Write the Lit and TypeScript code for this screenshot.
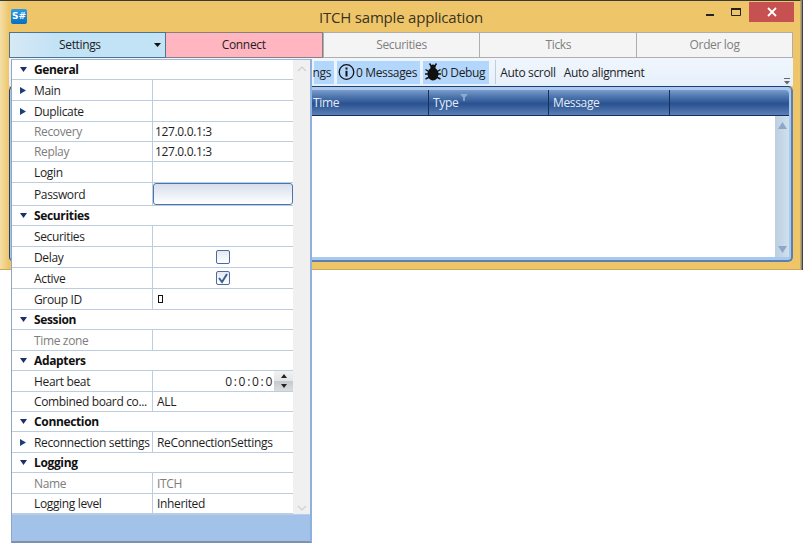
import { LitElement, html, css, svg } from 'lit'
import { customElement } from 'lit/decorators.js'

type Row = {
  label?: string
  value?: string
  h: number
  kind?: 'section' | 'password' | 'check' | 'checked' | 'spin' | 'box'
  expand?: boolean
  dim?: boolean
  dimValue?: boolean
}

const rows: Row[] = [
  { label: 'General', kind: 'section', h: 20 },
  { label: 'Main', expand: true, h: 21 },
  { label: 'Duplicate', expand: true, h: 21 },
  { label: 'Recovery', value: '127.0.0.1:3', dim: true, h: 20 },
  { label: 'Replay', value: '127.0.0.1:3', dim: true, h: 20 },
  { label: 'Login', h: 21 },
  { label: 'Password', kind: 'password', h: 23 },
  { label: 'Securities', kind: 'section', h: 20 },
  { label: 'Securities', h: 21 },
  { label: 'Delay', kind: 'check', h: 21 },
  { label: 'Active', kind: 'checked', h: 21 },
  { label: 'Group ID', kind: 'box', h: 21 },
  { label: 'Session', kind: 'section', h: 20 },
  { label: 'Time zone', dim: true, h: 21 },
  { label: 'Adapters', kind: 'section', h: 20 },
  { label: 'Heart beat', kind: 'spin', h: 21 },
  { label: 'Combined board co...', value: 'ALL', h: 20 },
  { label: 'Connection', kind: 'section', h: 20 },
  { label: 'Reconnection settings', value: 'ReConnectionSettings', expand: true, h: 21 },
  { label: 'Logging', kind: 'section', h: 20 },
  { label: 'Name', value: 'ITCH', dim: true, dimValue: true, h: 21 },
  { label: 'Logging level', value: 'Inherited', h: 20 },
]

const tri = (open: boolean) => html`<svg class="tri" width="8" height="8" viewBox="0 0 8 8">
  ${open ? svg`<path d="M0 1h7L3.5 6z" fill="#1b2f6b"/>` : svg`<path d="M0 1l6 3.5L0 8z" fill="#1b3f78"/>`}
</svg>`

@customElement('app-root')
export class AppRoot extends LitElement {
  static styles = css`
    :host {
      display: block;
      position: relative;
      width: 803px;
      height: 544px;
      overflow: hidden;
      background: #fff;
      font-family: "Open Sans", "Noto Sans", sans-serif;
      font-size: 12px;
      letter-spacing: -0.35px;
      color: #1e1e1e;
    }
    .window {
      width: 801px;
      height: 270px;
      box-sizing: border-box;
      background: linear-gradient(90deg, #f3dfa8, #eec669 9px);
      border: 1px solid #c9a85a;
      border-top-color: #3a3a3a;
      border-left-width: 0;
      padding: 0 7px 0 9px;
      box-shadow: 1px 0 0 #8a8a8a, 2px 0 0 #444;
    }
    .titlebar {
      height: 31px;
      display: flex;
      align-items: flex-start;
      position: relative;
    }
    .logo {
      width: 16px;
      height: 15px;
      margin: 8px 0 0 2px;
      border-radius: 2px;
      background: linear-gradient(#2f9be6, #0a6fbe);
      color: #fff;
      font: bold 9px/15px "DejaVu Sans", sans-serif;
      letter-spacing: 0;
      text-align: center;
    }
    .title {
      position: absolute;
      left: 0;
      right: 0;
      top: 6px;
      text-align: center;
      font-size: 15px;
      line-height: 20px;
      letter-spacing: -0.2px;
      color: #3a3320;
    }
    .controls {
      position: absolute;
      right: -1px;
      top: 1px;
      display: flex;
      align-items: flex-start;
    }
    .ctl {
      width: 26px;
      height: 20px;
      display: flex;
      align-items: center;
      justify-content: center;
    }
    .close {
      width: 45px;
      background: #c75050;
    }
    .tabs {
      display: flex;
      height: 26px;
    }
    .tab {
      flex: 0 0 20%;
      box-sizing: border-box;
      border: 1px solid #aeaeae;
      border-right-width: 0;
      padding-bottom: 2px;
      background: #f4f4f4;
      color: #7f7f7f;
      display: flex;
      align-items: center;
      justify-content: center;
      position: relative;
    }
    .tab:last-child {
      border-right-width: 1px;
    }
    .tab.settings {
      background: linear-gradient(90deg, #d7e9f5, #c2e2f6 30%);
      color: #1e1e1e;
      border: 1px solid #4d7590;
      padding-right: 15px;
    }
    .tab.connect {
      background: #ffb6c1;
      color: #1e1e1e;
      border: 1px solid #8a7f80;
      border-left-width: 0;
    }
    .caret {
      position: absolute;
      right: 4px;
      top: 10px;
    }
    .toolbar {
      height: 28px;
      background: linear-gradient(#f0f6fd, #e6f0fb);
      display: flex;
      align-items: center;
      padding-left: 305px;
      gap: 3px;
      position: relative;
    }
    .tbtn {
      height: 23px;
      background: #b3d7fc;
      display: flex;
      align-items: center;
      padding: 0 3px 0 1px;
    }
    .tbtn.first {
      padding: 0 3px 0 0;
      width: 17px;
      justify-content: flex-end;
    }
    .tbtn.debug {
      padding: 0 4px 0 2px;
    }
    .sep {
      width: 1px;
      height: 24px;
      background: #c3cdd8;
      margin: 0 1px 0 3px;
    }
    .plain {
      margin-right: 5px;
    }
    .overflow {
      position: absolute;
      right: 2px;
      bottom: 1px;
    }
    .panel {
      height: 176px;
      box-sizing: border-box;
      background: #a9c8ee;
      border: 1px solid #1f3f70;
      border-right: 2px solid #5d7fae;
      border-bottom: 2px solid #5d7fae;
      border-radius: 5px;
      padding: 3px 2px 3px 1px;
      display: flex;
      flex-direction: column;
    }
    .head {
      height: 26px;
      flex: none;
      box-sizing: border-box;
      display: grid;
      grid-template-columns: 418px 120px 121px 1fr;
      background: linear-gradient(#7c9ccb, #4f78b0 25%, #2b5290 55%, #5a80b6);
      border-bottom: 1px solid #16305e;
      border-radius: 4px 4px 0 0;
      color: #e3ecf8;
    }
    .hcell {
      display: flex;
      align-items: center;
      padding-left: 4px;
      border-right: 1px solid #16305e;
      position: relative;
    }
    .hcell:first-child {
      padding-left: 302px;
    }
    .hcell:last-child {
      border-right: 0;
    }
    .funnel {
      margin: -10px 0 0 2px;
    }
    .body {
      flex: 1;
      display: flex;
      background: #fff;
    }
    .grow {
      flex: 1;
    }
    .gridscroll {
      width: 14px;
      background: linear-gradient(90deg, #bccfe0, #cfe0ee);
      display: flex;
      flex-direction: column;
      justify-content: space-between;
      align-items: center;
      padding: 6px 0 4px;
    }
    .popup {
      position: absolute;
      left: 11px;
      top: 59px;
      width: 301px;
      height: 484px;
      box-sizing: border-box;
      border: 1px solid #9fb6d4;
      border-left-color: #8fa6c6;
      border-right: 2px solid #8fb0dc;
      border-bottom: 2px solid #7f92ac;
      background: #fff;
      display: flex;
      flex-direction: column;
    }
    .content {
      height: 454px;
      display: flex;
      flex: none;
    }
    .grid {
      width: 281px;
      flex: none;
    }
    .row {
      display: grid;
      grid-template-columns: 141px 1fr;
      box-sizing: border-box;
      border-bottom: 1px solid #bccddf;
    }
    .row.section {
      grid-template-columns: 1fr;
      font-weight: 700;
      color: #101010;
    }
    .h20 { height: 20px; }
    .h21 { height: 21px; }
    .h23 { height: 23px; }
    .name {
      display: flex;
      align-items: center;
      padding-left: 22px;
      position: relative;
      border-right: 1px solid #bccddf;
      white-space: nowrap;
    }
    .section .name {
      border-right: 0;
    }
    .tri {
      position: absolute;
      left: 8px;
      top: 6px;
    }
    .dim {
      color: #7d7d7d;
    }
    .val {
      display: flex;
      align-items: center;
      padding-left: 2px;
      white-space: nowrap;
      min-width: 0;
    }
    .val.pad {
      padding-left: 4px;
    }
    .val.center {
      justify-content: center;
      padding-left: 0;
    }
    .val.end {
      justify-content: flex-end;
      padding-left: 0;
      letter-spacing: 1.7px;
    }
    .pw {
      flex: 1;
      height: 22px;
      box-sizing: border-box;
      margin-left: -2px;
      border: 1px solid #4b74b2;
      border-radius: 3px;
      background: linear-gradient(#d7deec, #fff);
    }
    .check {
      width: 14px;
      height: 14px;
      box-sizing: border-box;
      border: 1px solid #4d6b9a;
      border-radius: 2px;
      background: linear-gradient(#e4e8f2, #fff);
      display: flex;
    }
    .glyphbox {
      width: 5px;
      height: 8px;
      box-sizing: border-box;
      margin-left: 3px;
      border: 1px solid #111;
    }
    .spin {
      width: 19px;
      height: 20px;
      box-sizing: border-box;
      background: linear-gradient(#f2f2f2, #e4e4e4 50%, #c4c9ce 50%, #dcdcdc);
      display: flex;
      flex-direction: column;
      align-items: center;
      justify-content: space-around;
      flex: none;
    }
    .vscroll {
      flex: 1;
      background: #f0f0f0;
      display: flex;
      flex-direction: column;
      justify-content: space-between;
      align-items: center;
      padding: 6px 0 3px;
    }
    .footer {
      flex: 1;
      background: #a3c2ea;
      border-top: 1px solid #b7cde8;
    }
  `

  renderValue(r: Row) {
    if (r.kind === 'password') return html`<div class="val"><div class="pw"></div></div>`
    if (r.kind === 'check') return html`<div class="val center"><div class="check"></div></div>`
    if (r.kind === 'checked') {
      return html`<div class="val center"><div class="check">
        <svg width="12" height="12" viewBox="0 0 12 12"><path d="M2 6l3 4 5-8" fill="none" stroke="#3d5f96" stroke-width="2"/></svg>
      </div></div>`
    }
    if (r.kind === 'box') return html`<div class="val"><div class="glyphbox"></div></div>`
    if (r.kind === 'spin') {
      return html`<div class="val end">0:0:0:0<div class="spin">
        <svg width="6" height="4" viewBox="0 0 6 4"><path d="M3 0l3 4H0z" fill="#222"/></svg>
        <svg width="6" height="4" viewBox="0 0 6 4"><path d="M0 0h6L3 4z" fill="#222"/></svg>
      </div></div>`
    }
    const cls = 'val' + (r.value && r.value !== '127.0.0.1:3' ? ' pad' : '') + (r.dimValue ? ' dim' : '')
    return html`<div class=${cls}>${r.value ?? ''}</div>`
  }

  renderRow(r: Row) {
    if (r.kind === 'section') {
      return html`<div class="row section h${r.h}"><div class="name">${tri(true)}${r.label}</div></div>`
    }
    return html`<div class="row h${r.h}">
      <div class="name ${r.dim ? 'dim' : ''}">${r.expand ? tri(false) : ''}${r.label}</div>
      ${this.renderValue(r)}
    </div>`
  }

  render() {
    return html`
      <div class="window">
        <div class="titlebar">
          <div class="logo">S#</div>
          <div class="title">ITCH sample application</div>
          <div class="controls">
            <div class="ctl"><svg width="10" height="10" viewBox="0 0 10 10"><path d="M1 7h8v2H1z" fill="#222"/></svg></div>
            <div class="ctl"><svg width="10" height="10" viewBox="0 0 10 10"><path d="M.5 1.5h9v7h-9z" fill="none" stroke="#222"/><path d="M0 1h10v2H0z" fill="#222"/></svg></div>
            <div class="ctl close"><svg width="10" height="10" viewBox="0 0 10 10"><path d="M1 1l8 8M9 1L1 9" stroke="#fff" stroke-width="1.8"/></svg></div>
          </div>
        </div>
        <div class="tabs">
          <div class="tab settings">Settings<svg class="caret" width="7" height="4" viewBox="0 0 7 4"><path d="M0 0h7L3.5 4z" fill="#111"/></svg></div>
          <div class="tab connect">Connect</div>
          <div class="tab">Securities</div>
          <div class="tab">Ticks</div>
          <div class="tab">Order log</div>
        </div>
        <div class="toolbar">
          <div class="tbtn first">ngs</div>
          <div class="tbtn">
            <svg width="18" height="18" viewBox="0 0 18 18"><circle cx="8.5" cy="9" r="7.3" fill="none" stroke="#111" stroke-width="1.3"/><path d="M7.5 4.5h2v2h-2zM7.5 7.8h2v5.7h-2z" fill="#111"/></svg>0 Messages
          </div>
          <div class="tbtn debug">
            <svg width="16" height="18" viewBox="0 0 16 18"><ellipse cx="8" cy="11" rx="5.5" ry="6.5" fill="#111"/><circle cx="8" cy="4" r="2.6" fill="#111"/><path d="M4.5 .5l2 3M11.5 .5l-2 3M.5 6.5l4 2.5M15.5 6.5l-4 2.5M0 11h4M16 11h-4M.5 16l4-2M15.5 16l-4-2" stroke="#111" stroke-width="1.4"/></svg>0 Debug
          </div>
          <div class="sep"></div>
          <span class="plain">Auto scroll</span>
          <span class="plain">Auto alignment</span>
          <svg class="overflow" width="8" height="7" viewBox="0 0 8 7"><path d="M1 .5h6" stroke="#666"/><path d="M1 3h6L4 6.5z" fill="#666"/></svg>
        </div>
        <div class="panel">
          <div class="head">
            <div class="hcell">Time</div>
            <div class="hcell">Type<svg class="funnel" width="8" height="7" viewBox="0 0 9 8"><path d="M0 0h9L5.5 4v4h-2V4z" fill="#8fa9cf"/></svg></div>
            <div class="hcell">Message</div>
            <div class="hcell"></div>
          </div>
          <div class="body">
            <div class="grow"></div>
            <div class="gridscroll">
              <svg width="9" height="7" viewBox="0 0 9 7"><path d="M4.5 0L9 7H0z" fill="#8fa6c8"/></svg>
              <svg width="9" height="7" viewBox="0 0 9 7"><path d="M0 0h9L4.5 7z" fill="#8fa6c8"/></svg>
            </div>
          </div>
        </div>
      </div>
      <div class="popup">
        <div class="content">
          <div class="grid">${rows.map((r) => this.renderRow(r))}</div>
          <div class="vscroll">
            <svg width="10" height="6" viewBox="0 0 10 6"><path d="M1 5l4-4 4 4" fill="none" stroke="#d0d0d0" stroke-width="1.2"/></svg>
            <svg width="10" height="6" viewBox="0 0 10 6"><path d="M1 1l4 4 4-4" fill="none" stroke="#d0d0d0" stroke-width="1.2"/></svg>
          </div>
        </div>
        <div class="footer"></div>
      </div>
    `
  }
}
